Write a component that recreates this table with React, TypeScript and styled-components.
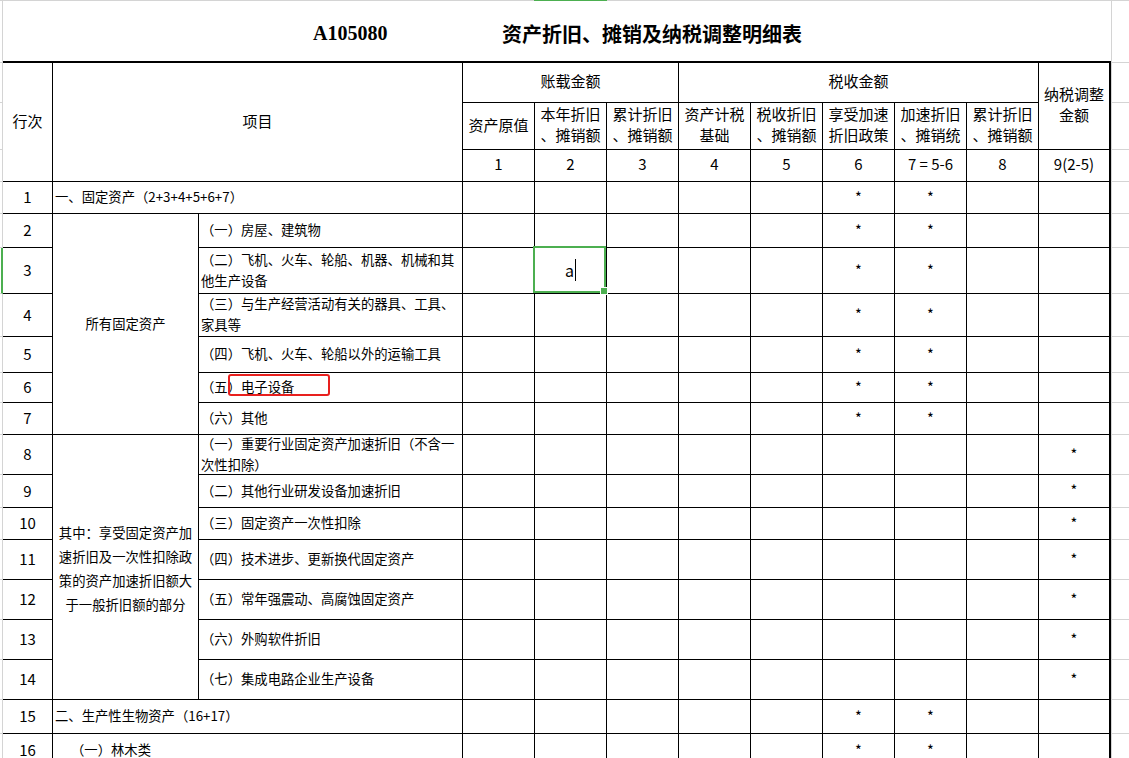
import React from 'react';
import styled, { createGlobalStyle } from 'styled-components';

const GRID = '#d4d4d4';
const LINE = '#000000';
const GREEN = '#4caf50';
const RED = '#e8201e';

const GlobalStyle = createGlobalStyle`
  html, body { margin: 0; padding: 0; background: #ffffff; }
  body {
    font-family: "Noto Sans CJK SC", "Noto Sans", sans-serif;
    color: #000;
    overflow: hidden;
  }
`;

const Page = styled.div`
  width: 1129px;
  height: 758px;
  overflow: hidden;
  background: #fff;
`;

const TopEdge = styled.div`
  display: flex;
  height: 1px;
`;

const EdgeSeg = styled.div<{ $w?: number; $active?: boolean }>`
  height: 1px;
  background: ${p => (p.$active ? GREEN : GRID)};
  ${p => (p.$w ? `width: ${p.$w}px; flex: none;` : 'flex: 1;')}
`;

const Sheet = styled.div`
  display: grid;
  grid-template-columns: 3px 50px 146px 264px repeat(9, 72px) 18px;
  grid-template-rows:
    62px 40px 47px 32px
    32px 34px 46px 43px 36px 30px 32px
    40px 33px 32px 40px 40px 40px 40px
    34px 34px;
`;

const RowEdge = styled.div<{ $active?: boolean }>`
  box-sizing: border-box;
  border-bottom: 1px solid ${GRID};
  border-right: ${p => (p.$active ? `2px solid ${GREEN}` : `1px solid ${GRID}`)};
`;

const Filler = styled.div`
  box-sizing: border-box;
  border-left: 1px solid ${GRID};
  border-bottom: 1px solid ${GRID};
`;

const TitleCell = styled.div`
  grid-column: span 12;
  box-sizing: border-box;
  border-bottom: 2px solid ${LINE};
  display: flex;
  align-items: center;
  padding: 5px 0 0 310px;
`;

const TitleCode = styled.span`
  width: 189px;
  flex: none;
  font-family: "Liberation Serif", serif;
  font-weight: 700;
  font-size: 20px;
`;

const TitleText = styled.span`
  font-family: "Noto Sans CJK SC", sans-serif;
  font-weight: 700;
  font-size: 20px;
`;

type CellProps = {
  $colSpan?: number;
  $rowSpan?: number;
  $left?: boolean;
  $body?: boolean;
  $head?: boolean;
  $last?: boolean;
  $indent?: number;
  $lh?: number;
  $pt?: number;
};

const Cell = styled.div<CellProps>`
  box-sizing: border-box;
  position: relative;
  grid-column: span ${p => p.$colSpan ?? 1};
  grid-row: span ${p => p.$rowSpan ?? 1};
  border-right: ${p => (p.$last ? 2 : 1)}px solid ${LINE};
  border-bottom: 1px solid ${LINE};
  display: flex;
  flex-direction: column;
  justify-content: center;
  align-items: ${p => (p.$left ? 'flex-start' : 'center')};
  text-align: ${p => (p.$left ? 'left' : 'center')};
  padding-left: ${p => (p.$left ? p.$indent ?? 2 : 0)}px;
  padding-top: ${p => p.$pt ?? 0}px;
  padding-bottom: ${p => (p.$head ? 4 : 2)}px;
  font-size: ${p => (p.$body ? '13.33px' : '15px')};
  line-height: ${p => p.$lh ?? 21}px;
  white-space: nowrap;
`;

const TextLine = styled.span`
  display: block;
`;

const Star = styled.span`
  font-size: 14.5px;
  line-height: 20px;
`;

const SelectionBox = styled.div`
  position: absolute;
  top: -2px;
  left: -2px;
  right: 0;
  bottom: 0;
  border: 2px solid ${GREEN};
  z-index: 2;
  pointer-events: none;
`;

const FillHandle = styled.div`
  position: absolute;
  right: -4px;
  bottom: -4px;
  width: 6px;
  height: 6px;
  background: ${GREEN};
  border: 1px solid #fff;
`;

const EditText = styled.span`
  display: flex;
  align-items: center;
  font-size: 16px;
  line-height: 22px;
`;

const Caret = styled.span`
  display: inline-block;
  width: 1px;
  height: 22px;
  background: #000;
  margin-left: 1px;
`;

const Marker = styled.div`
  position: absolute;
  left: 29px;
  top: 1px;
  width: 102px;
  height: 22px;
  box-sizing: border-box;
  border: 2px solid ${RED};
  border-radius: 3px;
  z-index: 2;
`;

const Lines: React.FC<{ lines: string[] }> = ({ lines }) => (
  <>
    {lines.map((l, i) => (
      <TextLine key={i}>{l}</TextLine>
    ))}
  </>
);

type BodyRow = {
  n: number;
  item: string[];
  span?: boolean;
  indent?: number;
  group?: { lines: string[]; rows: number; lh?: number; pt?: number };
  stars: number[];
  marker?: boolean;
};

const rows: BodyRow[] = [
  { n: 1, item: ['一、固定资产（2+3+4+5+6+7）'], span: true, stars: [5, 6] },
  {
    n: 2,
    item: ['（一）房屋、建筑物'],
    group: { lines: ['所有固定资产'], rows: 6 },
    stars: [5, 6],
  },
  { n: 3, item: ['（二）飞机、火车、轮船、机器、机械和其', '他生产设备'], stars: [5, 6] },
  { n: 4, item: ['（三）与生产经营活动有关的器具、工具、', '家具等'], stars: [5, 6] },
  { n: 5, item: ['（四）飞机、火车、轮船以外的运输工具'], stars: [5, 6] },
  { n: 6, item: ['（五）电子设备'], stars: [5, 6], marker: true },
  { n: 7, item: ['（六）其他'], stars: [5, 6] },
  {
    n: 8,
    item: ['（一）重要行业固定资产加速折旧（不含一', '次性扣除）'],
    group: {
      lines: ['其中：享受固定资产加', '速折旧及一次性扣除政', '策的资产加速折旧额大', '于一般折旧额的部分'],
      rows: 7,
      lh: 24,
      pt: 6,
    },
    stars: [8],
  },
  { n: 9, item: ['（二）其他行业研发设备加速折旧'], stars: [8] },
  { n: 10, item: ['（三）固定资产一次性扣除'], stars: [8] },
  { n: 11, item: ['（四）技术进步、更新换代固定资产'], stars: [8] },
  { n: 12, item: ['（五）常年强震动、高腐蚀固定资产'], stars: [8] },
  { n: 13, item: ['（六）外购软件折旧'], stars: [8] },
  { n: 14, item: ['（七）集成电路企业生产设备'], stars: [8] },
  { n: 15, item: ['二、生产性生物资产（16+17）'], span: true, stars: [5, 6] },
  { n: 16, item: ['（一）林木类'], span: true, indent: 18, stars: [5, 6] },
];

const subHeads: string[][] = [
  ['资产原值'],
  ['本年折旧', '、摊销额'],
  ['累计折旧', '、摊销额'],
  ['资产计税', '基础'],
  ['税收折旧', '、摊销额'],
  ['享受加速', '折旧政策'],
  ['加速折旧', '、摊销统'],
  ['累计折旧', '、摊销额'],
];

const colNums = ['1', '2', '3', '4', '5', '6', '7 = 5-6', '8'];

export default function App() {
  return (
    <Page>
      <GlobalStyle />
      <TopEdge>
        <EdgeSeg $w={534} />
        <EdgeSeg $w={73} $active />
        <EdgeSeg />
      </TopEdge>
      <Sheet>
        {/* title row */}
        <RowEdge />
        <TitleCell>
          <TitleCode>A105080</TitleCode>
          <TitleText>资产折旧、摊销及纳税调整明细表</TitleText>
        </TitleCell>
        <Filler />

        {/* header row A */}
        <RowEdge />
        <Cell $rowSpan={3} $head>行次</Cell>
        <Cell $rowSpan={3} $colSpan={2} $head>项目</Cell>
        <Cell $colSpan={3} $head>账载金额</Cell>
        <Cell $colSpan={5} $head>税收金额</Cell>
        <Cell $rowSpan={2} $last $head>
          <Lines lines={['纳税调整', '金额']} />
        </Cell>
        <Filler />

        {/* header row B */}
        <RowEdge />
        {subHeads.map((h, i) => (
          <Cell key={i} $head>
            <Lines lines={h} />
          </Cell>
        ))}
        <Filler />

        {/* header row C */}
        <RowEdge />
        {colNums.map((c, i) => (
          <Cell key={i} $head>{c}</Cell>
        ))}
        <Cell $last $head>9(2-5)</Cell>
        <Filler />

        {rows.map(r => (
          <React.Fragment key={r.n}>
            <RowEdge $active={r.n === 3} />
            <Cell>{r.n}</Cell>
            {r.group && (
              <Cell $rowSpan={r.group.rows} $body $lh={r.group.lh ?? 21} $pt={r.group.pt}>
                <Lines lines={r.group.lines} />
              </Cell>
            )}
            <Cell $colSpan={r.span ? 2 : 1} $left $body $indent={r.indent}>
              <Lines lines={r.item} />
              {r.marker && <Marker />}
            </Cell>
            {Array.from({ length: 9 }).map((_, i) => (
              <Cell key={i} $last={i === 8}>
                {r.stars.includes(i) && <Star>*</Star>}
                {r.n === 3 && i === 1 && (
                  <>
                    <EditText>
                      a<Caret />
                    </EditText>
                    <SelectionBox>
                      <FillHandle />
                    </SelectionBox>
                  </>
                )}
              </Cell>
            ))}
            <Filler />
          </React.Fragment>
        ))}
      </Sheet>
    </Page>
  );
}
